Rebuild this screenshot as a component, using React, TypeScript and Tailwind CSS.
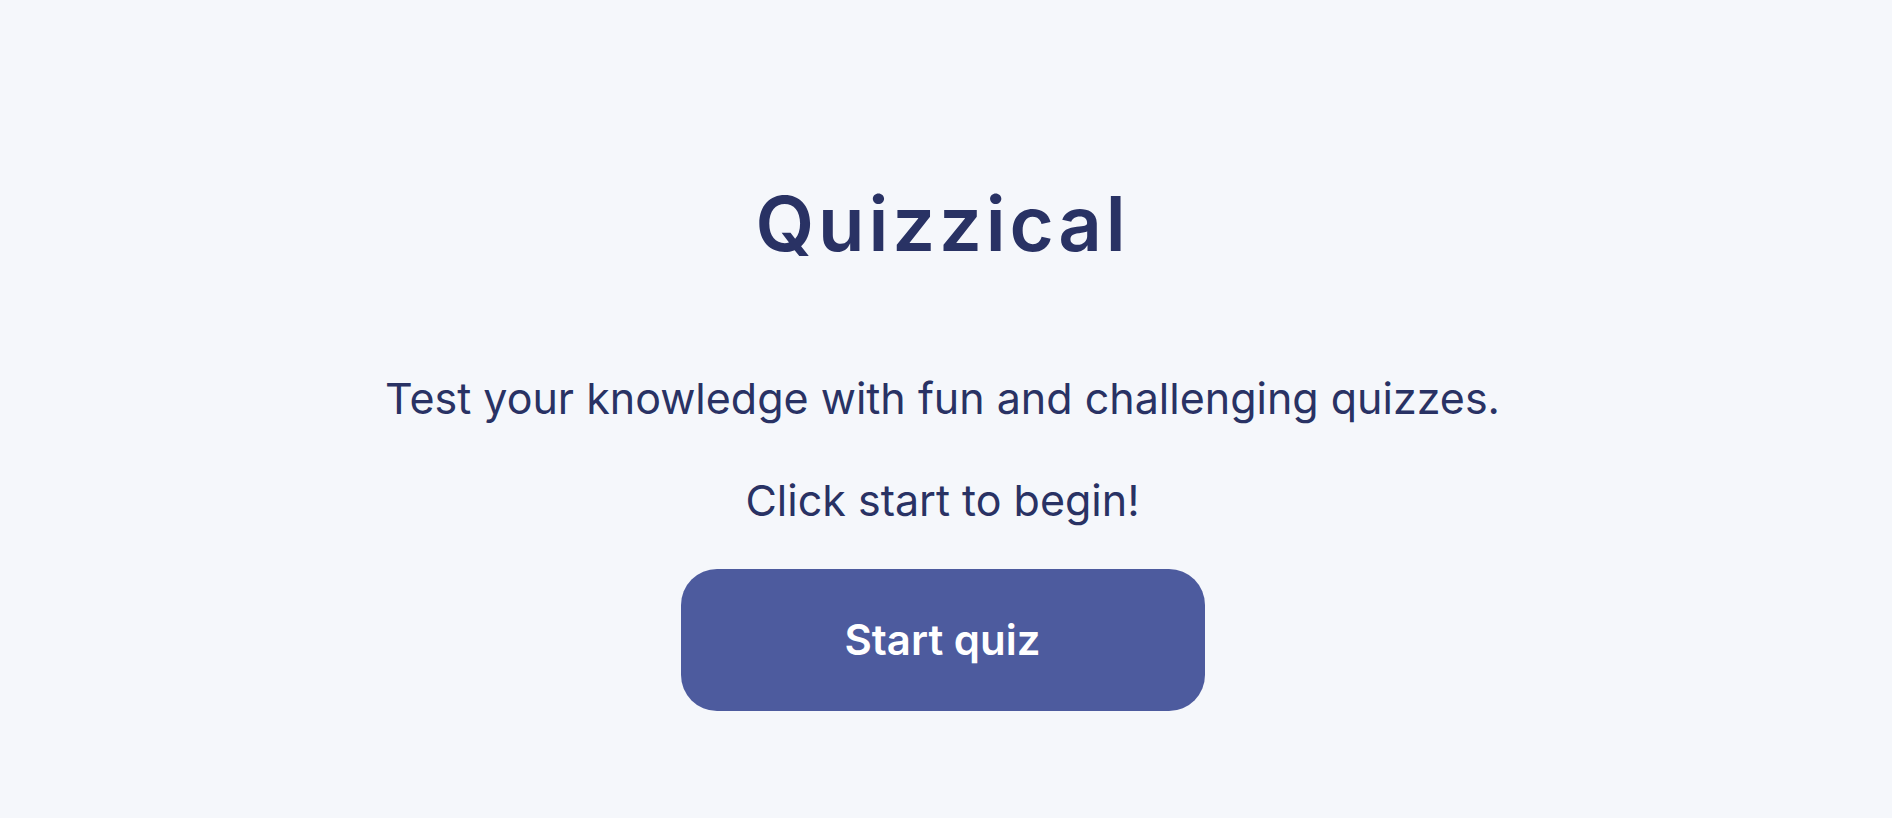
export default function App() {
  return (
    <div
      className="min-h-screen w-full bg-[#F5F7FB] flex flex-col items-center pr-[7px] text-[#293264]"
      style={{ fontFamily: "Inter, 'Noto Sans', sans-serif" }}
    >
      <h1 className="mt-[185px] text-[76px] leading-none font-semibold tracking-[0.05em]">Quizzical</h1>
      <p className="mt-[116px] text-[43px] leading-none">Test your knowledge with fun and challenging quizzes.</p>
      <p className="mt-[59px] text-[43px] leading-none">Click start to begin!</p>
      <button className="mt-[47px] w-[524px] h-[142px] rounded-[36px] bg-[#4D5B9E] text-white text-[42px] font-semibold leading-none flex items-center justify-center">
        Start quiz
      </button>
    </div>
  );
}
